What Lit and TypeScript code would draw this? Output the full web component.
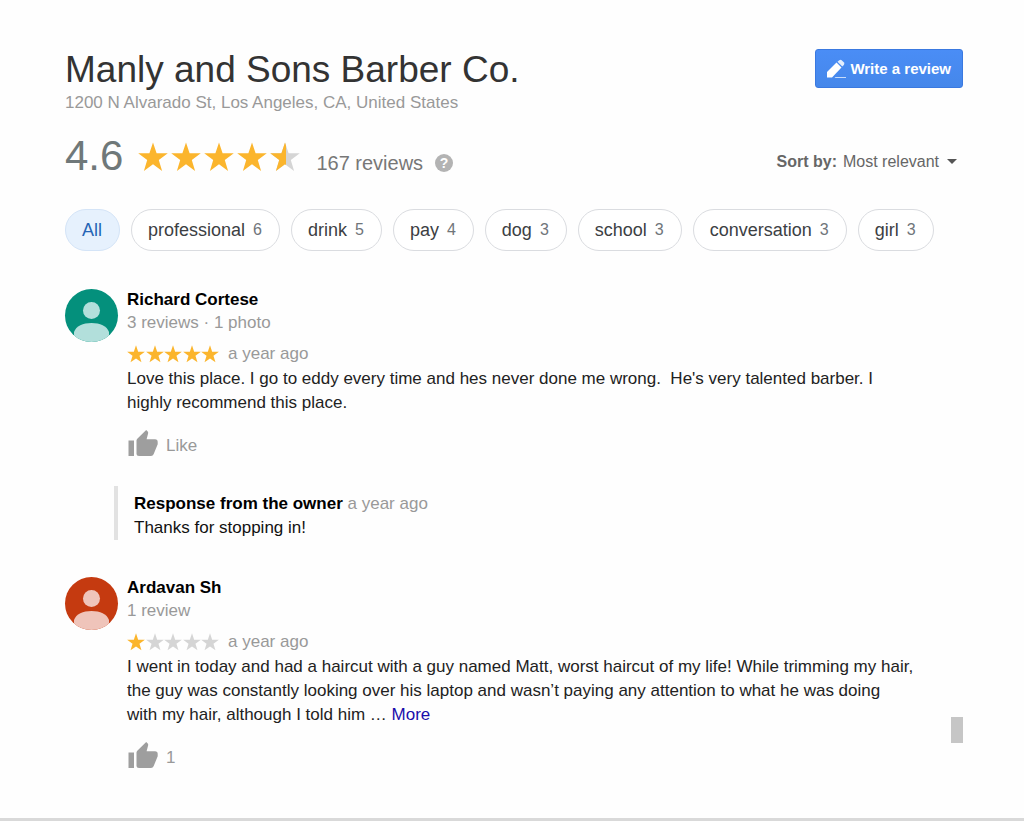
import { LitElement, html, css, svg, nothing } from "lit";
import { customElement, property, state } from "lit/decorators.js";
import { classMap } from "lit/directives/class-map.js";

interface Review {
  author: string;
  meta: string;
  rating: number;
  when: string;
  text: string;
  truncated?: boolean;
  likes: string;
  tone: "teal" | "rust";
  response?: { when: string; text: string };
}

const TOPICS: [string, number | null][] = [
  ["All", null],
  ["professional", 6],
  ["drink", 5],
  ["pay", 4],
  ["dog", 3],
  ["school", 3],
  ["conversation", 3],
  ["girl", 3],
];

const REVIEWS: Review[] = [
  {
    author: "Richard Cortese",
    meta: "3 reviews · 1 photo",
    rating: 5,
    when: "a year ago",
    text: "Love this place. I go to eddy every time and hes never done me wrong.  He's very talented barber. I highly recommend this place.",
    likes: "Like",
    tone: "teal",
    response: { when: "a year ago", text: "Thanks for stopping in!" },
  },
  {
    author: "Ardavan Sh",
    meta: "1 review",
    rating: 1,
    when: "a year ago",
    text: "I went in today and had a haircut with a guy named Matt, worst haircut of my life! While trimming my hair, the guy was constantly looking over his laptop and wasn’t paying any attention to what he was doing with my hair, although I told him … ",
    truncated: true,
    likes: "1",
    tone: "rust",
  },
];

@customElement("star-rating")
export class StarRating extends LitElement {
  @property({ type: Number }) value = 0;
  @property({ type: Boolean, reflect: true }) large = false;

  static styles = css`
    :host {
      display: flex;
      justify-content: space-between;
      width: 92px;
    }
    :host([large]) {
      width: 162px;
    }
    svg {
      display: block;
      width: 18px;
      height: 18px;
    }
    :host([large]) svg {
      width: 30px;
      height: 30px;
    }
    .empty {
      fill: #d5d5d5;
    }
    .full {
      fill: #fbb52d;
    }
  `;

  render() {
    return [0, 1, 2, 3, 4].map((i) => {
      const fill = this.value - i;
      return html`<svg viewBox="0 0 30 30" aria-hidden="true">
        <path
          class=${fill >= 0.9 ? "full" : "empty"}
          d="M15 0.5 18.6 11.2 29.8 11.3 20.8 18 24.1 28.9 15 22.3 5.9 28.9 9.2 18 0.2 11.3 11.4 11.2Z"
        />
        ${fill > 0.2 && fill < 0.9
          ? svg`<path class="full" d="M16 3.5 15 0.5 11.4 11.2 0.2 11.3 9.2 18 5.9 28.9 15 22.3 16 23Z" />`
          : nothing}
      </svg>`;
    });
  }
}

@customElement("review-item")
export class ReviewItem extends LitElement {
  @property({ attribute: false }) review!: Review;

  static styles = css`
    :host {
      display: grid;
      grid-template-columns: 53px minmax(0, 1fr);
      column-gap: 9px;
    }
    .avatar {
      display: block;
      overflow: hidden;
      width: 53px;
      height: 53px;
      margin-top: 1px;
      border-radius: 50%;
    }
    .teal {
      background: #04907c;
      fill: #b2dfdb;
    }
    .rust {
      background: #c53a10;
      fill: #efc4ba;
    }
    .author {
      margin: 0;
      font-size: 17px;
      line-height: 24px;
      font-weight: bold;
      color: #000;
    }
    .meta,
    .when {
      color: #999;
      line-height: 22px;
    }
    .rating {
      display: flex;
      align-items: center;
      gap: 9px;
      margin-top: 9px;
    }
    .text {
      margin: 2px 0 0;
      color: #222;
      line-height: 24px;
      white-space: pre-wrap;
    }
    a {
      color: #1a0dab;
      text-decoration: none;
    }
    .like {
      display: flex;
      align-items: flex-end;
      gap: 8px;
      margin-top: 14px;
      padding: 0;
      border: 0;
      background: none;
      font: inherit;
      line-height: 22px;
      color: #999;
      cursor: pointer;
    }
    .like svg {
      width: 31px;
      height: 28px;
      fill: #9e9e9e;
    }
    .response {
      grid-column: 1 / -1;
      margin: 29px 0 0 49px;
      padding: 6px 0 0 16px;
      border-left: 4px solid #e2e2e2;
      line-height: 24px;
      color: #111;
    }
    .response p {
      margin: 0;
    }
    .response strong {
      color: #000;
    }
  `;

  render() {
    const r = this.review;
    return html`
      <svg class="avatar ${r.tone}" viewBox="0 0 53 53" aria-hidden="true">
        <circle cx="26.500" cy="21.500" r="8.500" />
        <path d="M9 53V43C11 37 18 34 26.500 34S42 37 44 43V53Z" />
      </svg>
      <div>
        <h2 class="author">${r.author}</h2>
        <div class="meta">${r.meta}</div>
        <div class="rating">
          <star-rating .value=${r.rating}></star-rating>
          <span class="when">${r.when}</span>
        </div>
        <p class="text">${r.text}${r.truncated ? html`<a href="#more">More</a>` : nothing}</p>
        <button class="like" type="button">
          <svg viewBox="0 0 31 28" aria-hidden="true">
            <path d="M1.500 11.500H7V27H1.500Z" />
            <path d="M9.500 25V11.600Q9.500 10.500 10.300 9.700L19.200 1 20.700 2.500Q21.400 3.300 21.100 4.400L19.600 10.300H28Q30.800 10.500 30.700 13.200V15.200L26.600 25.300Q25.900 27 24 27H12Q9.500 26.900 9.500 25Z" />
          </svg>
          <span>${r.likes}</span>
        </button>
      </div>
      ${r.response
        ? html`<div class="response">
            <p><strong>Response from the owner</strong> <span class="when">${r.response.when}</span></p>
            <p>${r.response.text}</p>
          </div>`
        : nothing}
    `;
  }
}

@customElement("app-root")
export class AppRoot extends LitElement {
  @state() private topic = "All";

  static styles = css`
    :host {
      display: block;
      box-sizing: border-box;
      min-height: 100vh;
      padding: 48px 61px 24px 65px;
      border-bottom: 3px solid #d9d9d9;
      background: #fefefe;
      font-family: "Liberation Sans", Arial, sans-serif;
      font-size: 17px;
      color: #222;
    }
    header,
    .summary,
    .score {
      display: flex;
      align-items: center;
    }
    header,
    .summary {
      justify-content: space-between;
    }
    header {
      align-items: flex-start;
    }
    h1 {
      margin: 0;
      font-size: 37px;
      line-height: 44px;
      font-weight: normal;
      color: #333;
    }
    .address {
      line-height: 22px;
      color: #999;
    }
    .write {
      display: flex;
      align-items: center;
      gap: 4px;
      height: 39px;
      margin-top: 1px;
      padding: 0 11px 0 10px;
      border: 1px solid #3a79e0;
      border-radius: 3px;
      background: linear-gradient(#4a8df6, #4587ea);
      color: #fff;
      font: bold 15px "Liberation Sans", Arial, sans-serif;
    }
    .write svg {
      width: 20px;
      height: 20px;
      fill: #fff;
    }
    .summary {
      margin-top: 18px;
    }
    .value {
      font-size: 42px;
      line-height: 48px;
      color: #6f7879;
    }
    .score star-rating {
      margin: 2px 0 0 15px;
    }
    .count {
      margin: 14px 0 0 16px;
      font-size: 20px;
      line-height: 24px;
      color: #777;
    }
    .help {
      width: 18px;
      height: 18px;
      margin: 14px 0 0 12px;
      padding: 0;
      border: 0;
      border-radius: 50%;
      background: #b3b3b3;
      color: #fff;
      font: bold 14px/18px "Liberation Sans", Arial, sans-serif;
    }
    .sort {
      display: flex;
      align-items: baseline;
      gap: 6px;
      margin-top: 12px;
      padding-right: 6px;
      font-size: 16px;
      color: #666;
    }
    .sort label {
      font-weight: bold;
    }
    .picker {
      display: grid;
      align-items: center;
    }
    .picker > * {
      grid-area: 1 / 1;
    }
    select {
      appearance: none;
      padding: 0 17px 0 0;
      border: 0;
      background: none;
      font: inherit;
      color: inherit;
    }
    .arrow {
      justify-self: end;
      border: 5px solid transparent;
      border-top-color: #555;
      border-bottom: 0;
      pointer-events: none;
    }
    .topics {
      display: flex;
      flex-wrap: wrap;
      gap: 11px;
      margin-top: 29px;
    }
    .topic {
      display: flex;
      align-items: center;
      gap: 8px;
      height: 42px;
      padding: 0 17px 0 16px;
      border: 1px solid #dadce0;
      border-radius: 21px;
      background: #fff;
      font: 18px "Liberation Sans", Arial, sans-serif;
      color: #3c4043;
    }
    .topic span {
      font-size: 16px;
      color: #70757a;
    }
    .topic.active {
      border-color: #d4e4f7;
      background: #e6f1fd;
      color: #2565b5;
    }
    .reviews {
      display: flex;
      gap: 37px;
      margin-top: 37px;
    }
    .list {
      display: grid;
      flex: 1;
      min-width: 0;
      gap: 36px;
    }
    .thumb {
      align-self: flex-end;
      width: 12px;
      height: 26px;
      margin-bottom: 26px;
      background: #c6c6c6;
    }
  `;

  render() {
    return html`
      <header>
        <div>
          <h1>Manly and Sons Barber Co.</h1>
          <div class="address">1200 N Alvarado St, Los Angeles, CA, United States</div>
        </div>
        <button class="write" type="button">
          <svg viewBox="0 0 20 20" aria-hidden="true">
            <path d="M1 18.500V13L10.500 3.500 15.500 8.500 6 18.500Z" />
            <path d="M11.500 2.700 13.300 1.200Q14.500 0.400 15.700 1.300L18 3.600Q18.800 4.800 17.900 6L16.300 7.500Z" opacity="0.85" />
            <path d="M9.500 18H20V19H8.500Z" opacity="0.7" />
          </svg>
          Write a review
        </button>
      </header>
      <section class="summary">
        <div class="score">
          <span class="value">4.6</span>
          <star-rating large .value=${4.6}></star-rating>
          <span class="count">167 reviews</span>
          <button class="help" type="button">?</button>
        </div>
        <div class="sort">
          <label for="sort">Sort by:</label>
          <div class="picker">
            <select id="sort">
              <option>Most relevant</option>
            </select>
            <i class="arrow"></i>
          </div>
        </div>
      </section>
      <nav class="topics">
        ${TOPICS.map(
          ([name, n]) => html`<button
            type="button"
            class=${classMap({ topic: true, active: name === this.topic })}
            @click=${() => (this.topic = name)}
          >
            ${name}${n === null ? nothing : html`<span>${n}</span>`}
          </button>`
        )}
      </nav>
      <section class="reviews">
        <div class="list">
          ${REVIEWS.map((r) => html`<review-item .review=${r}></review-item>`)}
        </div>
        <div class="thumb"></div>
      </section>
    `;
  }
}
